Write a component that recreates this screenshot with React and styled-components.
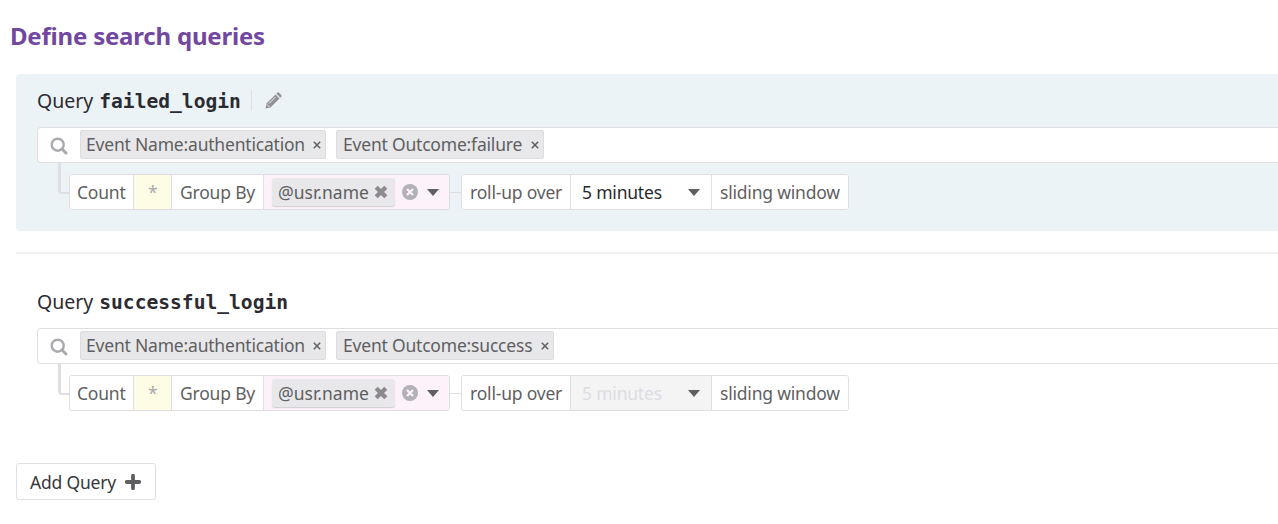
import React from "react";
import styled, { createGlobalStyle } from "styled-components";

const Global = createGlobalStyle`
  *, *::before, *::after { box-sizing: border-box; }
  html, body { margin: 0; background: #fff; overflow: hidden; }
  body { font-family: "Noto Sans", sans-serif; font-size: 17.5px; letter-spacing: -0.2px; color: #5f5f62; }
`;
const line = "#dfdfe3";

const Page = styled.main`
  width: 1278px;
  height: 524px;
  overflow: hidden;
  padding-left: 16px;
`;
const Title = styled.h1`
  margin: 0 0 0 -6px;
  height: 74px;
  line-height: 72px;
  font-size: 24px;
  font-weight: 700;
  color: #7147a0;
  white-space: nowrap;
`;
const Panel = styled.section`
  height: 157px;
  padding: 10px 0 0 21px;
  border-radius: 4px 0 0 4px;
  background: ${(p) => (p.$active ? "#ebf3f7" : "transparent")};
`;
const Divider = styled.hr`
  height: 2px;
  margin: 21px 0;
  border: 0;
  background: #f0f0f1;
`;
const Heading = styled.h2`
  display: flex;
  align-items: center;
  height: 33px;
  margin: 0 0 10px;
  font-size: 19.5px;
  font-weight: 400;
  letter-spacing: 0;
  color: #2b2b31;
  white-space: pre;
`;
const Name = styled.code`
  font-family: "DejaVu Sans Mono", monospace;
  font-weight: 700;
  font-size: 19.6px;
  margin: 2px 0 0 6px;
`;
const Edit = styled.span`
  display: flex;
  align-items: center;
  height: 21px;
  margin-left: 10px;
  padding-left: 13px;
  border-left: 1px solid ${line};
`;
const Search = styled.div`
  display: flex;
  align-items: flex-start;
  height: 36px;
  padding: 2px 0 0 12px;
  border: 1px solid ${line};
  border-width: 1px 0 1px 1px;
  border-radius: 4px 0 0 4px;
  background: #fff;
`;
const SearchIcon = styled.svg`
  width: 18px;
  height: 18px;
  margin: 7px 12px 0 0;
`;
const Tag = styled.span`
  display: flex;
  align-items: center;
  justify-content: space-between;
  width: ${(p) => p.$w}px;
  height: 29px;
  margin-right: 10px;
  padding: 0 4px 1px 5px;
  border: 1px solid #dddddf;
  border-radius: 2px;
  background: #e8e8ea;
  white-space: nowrap;
  & + & { padding-left: 6px; }
`;
const SmallX = styled.svg`
  width: 8px;
  height: 8px;
  margin-top: 2px;
`;
const Options = styled.div`
  display: flex;
  align-items: flex-start;
  padding-left: 21px;
`;
const Elbow = styled.div`
  width: 11px;
  height: 31px;
  border: solid ${line};
  border-width: 0 0 2px 3px;
  border-radius: 0 0 0 4px;
`;
const Group = styled.div`
  display: flex;
  height: 36px;
  margin-top: 11px;
  border: 1px solid ${line};
  border-radius: 3px;
  background: #fff;
  overflow: hidden;
`;
const Cell = styled.div`
  display: flex;
  align-items: center;
  width: ${(p) => p.$w}px;
  padding-left: ${(p) => p.$pad ?? 8}px;
  background: ${(p) => p.$bg || "#fff"};
  color: ${(p) => p.$ink || "inherit"};
  white-space: nowrap;
  & + & { border-left: 1px solid ${line}; }
`;
const Link = styled.div`
  width: 11px;
  height: 1px;
  margin-top: 29px;
  background: ${line};
`;
const Chip = styled.span`
  display: flex;
  align-items: center;
  justify-content: space-between;
  width: 123px;
  height: 28px;
  margin-right: 7px;
  padding: 0 6px 0 6px;
  border-radius: 3px;
  background: #e8e8ea;
  box-shadow: 0 1px 1px #cfcfd3;
  letter-spacing: 0;
`;
const Icon = styled.svg`
  width: ${(p) => p.$w}px;
  height: ${(p) => p.$h ?? p.$w}px;
  flex: none;
`;
const Caret = styled.span`
  margin-left: ${(p) => p.$gap}px;
  border: solid transparent;
  border-width: 7px 6px 0;
  border-top-color: #5f5f62;
`;
const Select = styled.span`
  width: 79px;
`;
const AddButton = styled.button`
  display: flex;
  align-items: center;
  gap: 9px;
  width: 140px;
  height: 37px;
  margin-top: 31px;
  padding: 0 0 0 13px;
  border: 1px solid ${line};
  border-radius: 3px;
  background: #fff;
  color: #38383c;
  font: inherit;
  letter-spacing: inherit;
  white-space: nowrap;
`;

const Pencil = () => (
  <Icon $w={17} viewBox="0 0 17 17">
    <path d="M0.5 16.5 1.5 11.5 10.5 2.5 14.5 6.5 5.5 15.5Z" fill="#929296" />
    <path d="M11.3 1.7 12.4.6Q13.1 0 13.8.6L16.4 3.2Q17 3.9 16.4 4.6L15.3 5.7Z" fill="#929296" />
    <path d="M4 11.5 10.5 5M2 12.5 4.5 15" stroke="#ebf3f7" strokeWidth="1" fill="none" />
  </Icon>
);

const Filter = ({ w, children }) => (
  <Tag $w={w}>
    <span>{children}</span>
    <SmallX viewBox="0 0 8 8">
      <path d="M.8.8 7.2 7.2M7.2.8.8 7.2" stroke="#5f5f62" strokeWidth="1.5" />
    </SmallX>
  </Tag>
);

function Query({ name, outcome, outcomeWidth, active }) {
  return (
    <Panel $active={active}>
      <Heading>
        Query<Name>{name}</Name>
        {active && <Edit><Pencil /></Edit>}
      </Heading>
      <Search>
        <SearchIcon viewBox="0 0 18 18" fill="none" stroke="#a9a9ae">
          <circle cx="7.7" cy="7.7" r="6" strokeWidth="2.4" />
          <path d="m12 12 4 4" strokeWidth="3" strokeLinecap="round" />
        </SearchIcon>
        <Filter w={246}>Event Name:authentication</Filter>
        <Filter w={outcomeWidth}>Event Outcome:{outcome}</Filter>
      </Search>
      <Options>
        <Elbow />
        <Group>
          <Cell $w={63} $pad={7}>Count</Cell>
          <Cell $w={38} $pad={14} $bg="#fffce6" $ink="#aaaaad">*</Cell>
          <Cell $w={92}>Group By</Cell>
          <Cell $w={186} $bg="#fdf1fa">
            <Chip>
              @usr.name
              <Icon $w={16} viewBox="0 0 14 14">
                <path d="m2.8 2.8 8.4 8.4m0-8.4-8.4 8.4" stroke="#8b8b8f" strokeWidth="3.8" />
              </Icon>
            </Chip>
            <Icon $w={16} viewBox="0 0 16 16">
              <circle cx="8" cy="8" r="8" fill="#b1b1b6" />
              <path d="m5 5 6 6m0-6-6 6" stroke="#fdf1fa" strokeWidth="2.3" />
            </Icon>
            <Caret $gap={9} />
          </Cell>
        </Group>
        <Link />
        <Group>
          <Cell $w={108}>roll-up over</Cell>
          <Cell $w={141} $pad={11} $bg={active ? "#fff" : "#f4f4f5"} $ink={active ? "#29292d" : "#dcdce2"}>
            <Select>5 minutes</Select>
            <Caret $gap={27} />
          </Cell>
          <Cell $w={137}>sliding window</Cell>
        </Group>
      </Options>
    </Panel>
  );
}

export default function App() {
  return (
    <Page>
      <Global />
      <Title>Define search queries</Title>
      <Query name="failed_login" outcome="failure" outcomeWidth={208} active />
      <Divider />
      <Query name="successful_login" outcome="success" outcomeWidth={218} />
      <AddButton>
        Add Query
        <Icon $w={16} viewBox="0 0 16 16">
          <path d="M8 1.8v12.4M1.8 8h12.4" stroke="#5f5f62" strokeWidth="3.8" strokeLinecap="round" />
        </Icon>
      </AddButton>
    </Page>
  );
}
